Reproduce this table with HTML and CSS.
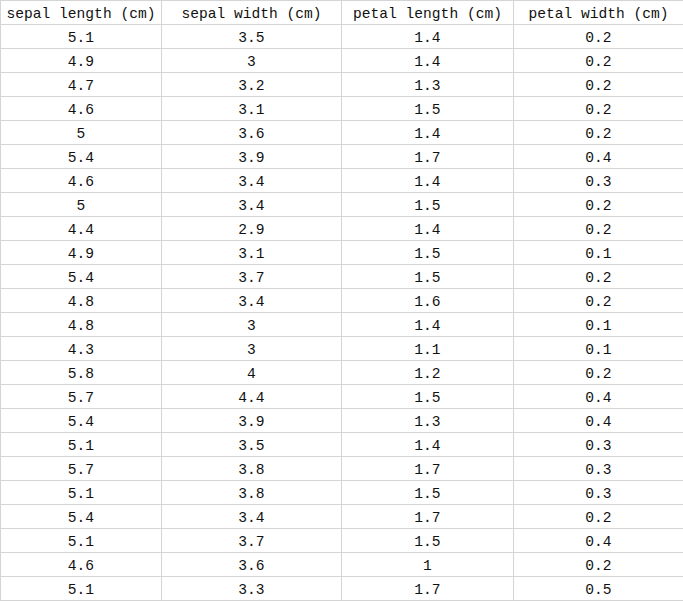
FILE: index.html
```html
<!DOCTYPE html>
<html>
<head>
<meta charset="utf-8">
<link rel="stylesheet" href="styles.css">
</head>
<body>
<table class="grid">
<colgroup>
<col class="c1"><col class="c2"><col class="c3"><col class="c4">
</colgroup>
<thead>
<tr><th>sepal length (cm)</th><th>sepal width (cm)</th><th>petal length (cm)</th><th>petal width (cm)</th></tr>
</thead>
<tbody>
<tr><td>5.1</td><td>3.5</td><td>1.4</td><td>0.2</td></tr>
<tr><td>4.9</td><td>3</td><td>1.4</td><td>0.2</td></tr>
<tr><td>4.7</td><td>3.2</td><td>1.3</td><td>0.2</td></tr>
<tr><td>4.6</td><td>3.1</td><td>1.5</td><td>0.2</td></tr>
<tr><td>5</td><td>3.6</td><td>1.4</td><td>0.2</td></tr>
<tr><td>5.4</td><td>3.9</td><td>1.7</td><td>0.4</td></tr>
<tr><td>4.6</td><td>3.4</td><td>1.4</td><td>0.3</td></tr>
<tr><td>5</td><td>3.4</td><td>1.5</td><td>0.2</td></tr>
<tr><td>4.4</td><td>2.9</td><td>1.4</td><td>0.2</td></tr>
<tr><td>4.9</td><td>3.1</td><td>1.5</td><td>0.1</td></tr>
<tr><td>5.4</td><td>3.7</td><td>1.5</td><td>0.2</td></tr>
<tr><td>4.8</td><td>3.4</td><td>1.6</td><td>0.2</td></tr>
<tr><td>4.8</td><td>3</td><td>1.4</td><td>0.1</td></tr>
<tr><td>4.3</td><td>3</td><td>1.1</td><td>0.1</td></tr>
<tr><td>5.8</td><td>4</td><td>1.2</td><td>0.2</td></tr>
<tr><td>5.7</td><td>4.4</td><td>1.5</td><td>0.4</td></tr>
<tr><td>5.4</td><td>3.9</td><td>1.3</td><td>0.4</td></tr>
<tr><td>5.1</td><td>3.5</td><td>1.4</td><td>0.3</td></tr>
<tr><td>5.7</td><td>3.8</td><td>1.7</td><td>0.3</td></tr>
<tr><td>5.1</td><td>3.8</td><td>1.5</td><td>0.3</td></tr>
<tr><td>5.4</td><td>3.4</td><td>1.7</td><td>0.2</td></tr>
<tr><td>5.1</td><td>3.7</td><td>1.5</td><td>0.4</td></tr>
<tr><td>4.6</td><td>3.6</td><td>1</td><td>0.2</td></tr>
<tr><td>5.1</td><td>3.3</td><td>1.7</td><td>0.5</td></tr>
</tbody>
</table>
</body>
</html>
```
FILE: styles.css
```css
html, body {
  margin: 0;
  padding: 0;
  background: #ffffff;
}
.grid {
  border-collapse: collapse;
  table-layout: fixed;
  width: 683px;
  font-family: "Liberation Mono", "DejaVu Sans Mono", monospace;
  font-size: 14.6px;
  color: #111111;
}
.c1 { width: 161px; }
.c2 { width: 180px; }
.c3 { width: 172px; }
.c4 { width: 170px; }
.grid th,
.grid td {
  border: 1px solid #d4d4d4;
  height: 19px;
  padding: 4px 0 0;
  text-align: center;
  vertical-align: middle;
  font-weight: normal;
  white-space: nowrap;
  line-height: 19px;
}
```
